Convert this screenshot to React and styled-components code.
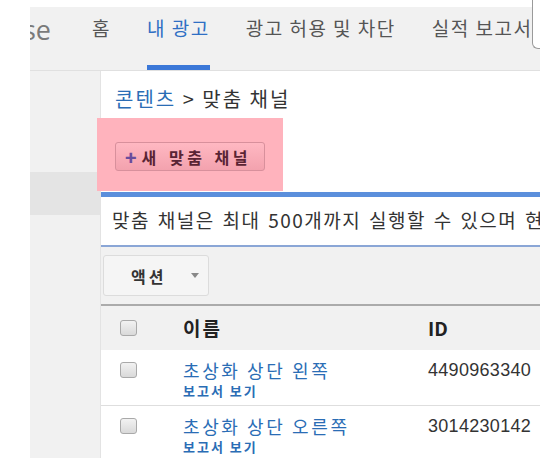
import styled, { createGlobalStyle } from "styled-components";

const GlobalStyle = createGlobalStyle`
  html, body {
    margin: 0;
    padding: 0;
    background: #fff;
  }
  body {
    font-family: "Noto Sans CJK KR", "Liberation Sans", sans-serif;
  }
`;

const tabs = [
  { label: "홈" },
  { label: "내 광고", active: true },
  { label: "광고 허용 및 차단" },
  { label: "실적 보고서" },
];

const channels = [
  { name: "초상화 상단 왼쪽", id: "4490963340" },
  { name: "초상화 상단 오른쪽", id: "3014230142" },
];

const App = () => {
  return (
    <Page>
      <GlobalStyle />
      <Frame>
        <Header>
          <LogoClip>
            <span>AdSense</span>
          </LogoClip>
          <Tabs>
            {tabs.map((t) => (
              <Tab key={t.label} $active={t.active}>
                {t.label}
              </Tab>
            ))}
          </Tabs>
        </Header>
        <Body>
          <Sidebar>
            <SideBand />
          </Sidebar>
          <Main>
            <Breadcrumb>
              <CrumbLink>콘텐츠</CrumbLink> &gt; 맞춤 채널
            </Breadcrumb>
            <Highlight>
              <NewButton>
                <Plus>+</Plus>새 맞춤 채널
              </NewButton>
            </Highlight>
            <InfoBox>
              맞춤 채널은 최대 500개까지 실행할 수 있으며 현재 맞춤 채널 2개를
              실행하고 있습니다.
            </InfoBox>
            <Toolbar>
              <ActionButton>
                액션
                <Caret />
              </ActionButton>
            </Toolbar>
            <Table>
              <HeadRow>
                <CheckCell>
                  <Checkbox />
                </CheckCell>
                <HeadCell $spacing={2}>이름</HeadCell>
                <HeadCell $spacing={0}>ID</HeadCell>
              </HeadRow>
              {channels.map((c) => (
                <Row key={c.id}>
                  <CheckCell>
                    <Checkbox />
                  </CheckCell>
                  <NameCell>
                    <NameLink>{c.name}</NameLink>
                    <ReportLink>보고서 보기</ReportLink>
                  </NameCell>
                  <IdCell>{c.id}</IdCell>
                </Row>
              ))}
            </Table>
          </Main>
        </Body>
      </Frame>
      <EdgePanel />
    </Page>
  );
};

export default App;

const Page = styled.div`
  position: relative;
  width: 540px;
  height: 458px;
  overflow: hidden;
  background: #fff;
  padding: 7px 0 0 30px;
  box-sizing: border-box;
`;

const Frame = styled.div`
  display: flex;
  flex-direction: column;
  width: 510px;
  height: 451px;
`;

const Header = styled.div`
  display: flex;
  height: 64px;
  background: #f1f1f1;
  border-bottom: 1px solid #e0e0e0;
  box-sizing: border-box;
`;

const LogoClip = styled.div`
  display: flex;
  justify-content: flex-end;
  width: 21px;
  flex-shrink: 0;
  overflow: hidden;
  padding-top: 6px;
  font-family: "Open Sans", "Liberation Sans", sans-serif;
  font-size: 27px;
  line-height: 34px;
  color: #7a7a7a;
  white-space: nowrap;
`;

const Tabs = styled.div`
  display: flex;
  gap: 36px;
  margin-left: 41px;
`;

const Tab = styled.div`
  height: 63px;
  box-sizing: border-box;
  padding-top: 8px;
  font-size: 19px;
  line-height: 26px;
  letter-spacing: 1.5px;
  white-space: nowrap;
  color: ${(p) => (p.$active ? "#2f6fc4" : "#555")};
  border-bottom: 5px solid ${(p) => (p.$active ? "#3b78d8" : "transparent")};
`;

const Body = styled.div`
  display: flex;
  flex: 1;
`;

const Sidebar = styled.div`
  width: 70px;
  flex-shrink: 0;
  background: #f1f1f1;
  border-right: 1px solid #e3e3e3;
  padding-top: 101px;
`;

const SideBand = styled.div`
  height: 43px;
  background: #e4e4e4;
`;

const Main = styled.div`
  flex: 1;
  min-width: 0;
  display: flex;
  flex-direction: column;
  background: #fff;
`;

const Breadcrumb = styled.div`
  height: 47px;
  box-sizing: border-box;
  padding: 15px 0 0 14px;
  font-size: 20px;
  line-height: 26px;
  letter-spacing: 2px;
  color: #333;
  white-space: nowrap;
`;

const CrumbLink = styled.span`
  color: #2a6db5;
`;

const Highlight = styled.div`
  margin-left: -4px;
  width: 186px;
  height: 73px;
  box-sizing: border-box;
  padding: 24px 0 0 18px;
  background: #ffb3bd;
`;

const NewButton = styled.div`
  display: flex;
  align-items: center;
  width: 150px;
  height: 29px;
  box-sizing: border-box;
  padding-left: 9px;
  border: 1px solid #d8909c;
  border-radius: 3px;
  background: linear-gradient(#ffb8c2, #f3a2ae);
  font-size: 16px;
  font-weight: 700;
  color: #5a2434;
  letter-spacing: 3.5px;
  word-spacing: 2px;
  white-space: nowrap;
`;

const Plus = styled.span`
  color: #6a4c9c;
  font-size: 19px;
  font-weight: 900;
  letter-spacing: 0;
  margin-right: 5px;
`;

const InfoBox = styled.div`
  margin-top: 1px;
  height: 55px;
  box-sizing: border-box;
  padding: 0 0 0 11px;
  border-top: 5px solid #5b8fdc;
  border-bottom: 2px solid #8aa6d6;
  background: #fff;
  font-size: 19px;
  line-height: 46px;
  letter-spacing: 1.5px;
  word-spacing: 2px;
  color: #333;
  white-space: nowrap;
  overflow: hidden;
`;

const Toolbar = styled.div`
  background: #f1f1f1;
  padding: 8px 0 8px 2px;
  border-bottom: 2px solid #ababab;
`;

const ActionButton = styled.div`
  display: flex;
  align-items: center;
  width: 106px;
  height: 41px;
  box-sizing: border-box;
  padding-left: 27px;
  border: 1px solid #dcdcdc;
  border-radius: 3px;
  background: #f5f5f5;
  font-size: 16px;
  font-weight: 700;
  letter-spacing: 3px;
  color: #333;
`;

const Caret = styled.span`
  margin-left: 25px;
  width: 0;
  height: 0;
  border-left: 4px solid transparent;
  border-right: 4px solid transparent;
  border-top: 5px solid #888;
`;

const Table = styled.div`
  display: flex;
  flex-direction: column;
`;

const HeadRow = styled.div`
  display: grid;
  grid-template-columns: 82px 245px 1fr;
  align-items: center;
  height: 44px;
  background: #f1f1f1;
`;

const Row = styled.div`
  display: grid;
  grid-template-columns: 82px 245px 1fr;
  align-items: start;
  height: 56px;
  box-sizing: border-box;
  padding-top: 7px;
  border-bottom: 1px solid #dedede;
  background: #fff;
`;

const CheckCell = styled.div`
  padding-left: 19px;
  display: flex;
  align-items: center;
  height: 26px;
`;

const Checkbox = styled.span`
  display: block;
  width: 17px;
  height: 16px;
  box-sizing: border-box;
  border: 1px solid #a9a9a9;
  border-radius: 3px;
  background: linear-gradient(#f2f2f2, #d9d9d9);
`;

const HeadCell = styled.div`
  font-size: 19px;
  font-weight: 700;
  letter-spacing: ${(p) => p.$spacing}px;
  color: #222;
  line-height: 26px;
`;

const NameCell = styled.div`
  display: flex;
  flex-direction: column;
  white-space: nowrap;
`;

const NameLink = styled.span`
  font-size: 18px;
  line-height: 26px;
  color: #2a6db5;
  letter-spacing: 2.6px;
`;

const ReportLink = styled.span`
  font-size: 13px;
  line-height: 19px;
  margin-top: -2px;
  font-weight: 700;
  letter-spacing: 2px;
  color: #2a6db5;
`;

const IdCell = styled.div`
  font-family: "Liberation Sans", Arial, sans-serif;
  font-size: 18px;
  line-height: 26px;
  letter-spacing: 0.3px;
  color: #333;
  white-space: nowrap;
`;

const EdgePanel = styled.div`
  position: absolute;
  top: -2px;
  left: 532px;
  width: 20px;
  height: 50px;
  background: #fff;
  border-left: 1px solid #9a9a9a;
  border-bottom: 1px solid #9a9a9a;
  border-bottom-left-radius: 6px;
`;
